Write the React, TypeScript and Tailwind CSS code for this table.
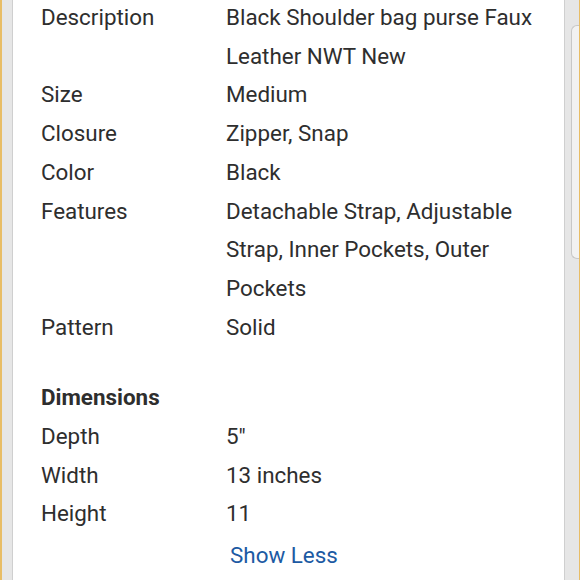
import React from 'react';

const rows: [string, string][] = [
  ['Description', 'Black Shoulder bag purse Faux Leather NWT New'],
  ['Size', 'Medium'],
  ['Closure', 'Zipper, Snap'],
  ['Color', 'Black'],
  ['Features', 'Detachable Strap, Adjustable Strap, Inner Pockets, Outer Pockets'],
  ['Pattern', 'Solid'],
];

const dims: [string, string][] = [
  ['Depth', '5"'],
  ['Width', '13 inches'],
  ['Height', '11'],
];

const Row = ({ label, value }: { label: string; value: string }) => (
  <div className="flex">
    <div className="w-[185px] shrink-0">{label}</div>
    <div className="w-[320px]">{value}</div>
  </div>
);

export default function App() {
  return (
    <div
      className="flex h-[580px] w-[580px] overflow-hidden bg-[#e6e6e6]"
      style={{ fontFamily: 'Roboto, "Liberation Sans", sans-serif' }}
    >
      <div className="w-[2px] bg-[#e8bd66]" />
      <div className="w-[11px] border-r border-[#cfcfcf]" />
      <div className="flex-1 bg-white pl-[28px] pt-0 text-[22.4px] leading-[38.7px] text-[#2e2e2e]">
        <div className="-mt-[2px]">
          {rows.map(([l, v]) => (
            <Row key={l} label={l} value={v} />
          ))}
        </div>
        <div className="mt-[32px] font-bold">Dimensions</div>
        {dims.map(([l, v]) => (
          <Row key={l} label={l} value={v} />
        ))}
        <div className="mt-[3px] pl-[189px] text-[#1c5aa3]">Show Less</div>
      </div>
      <div className="relative w-[15px] border-l border-[#cfcfcf]">
        <div className="absolute left-[6px] top-[25px] h-[234px] w-[8px] rounded-l-[6px] border border-r-0 border-[#c8c8c8] bg-[#f2f2f2]" />
      </div>
      <div className="w-[1px] bg-[#e8bd66]" />
    </div>
  );
}
